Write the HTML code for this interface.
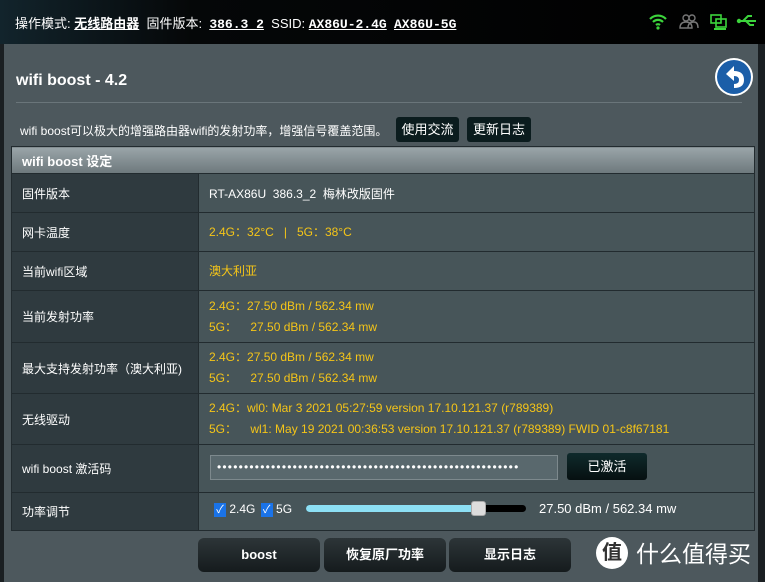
<!DOCTYPE html>
<html><head><meta charset="utf-8"><style>
*{margin:0;padding:0;box-sizing:border-box}
html,body{width:765px;height:582px;overflow:hidden}
body{background:#1a1f22;font-family:"Liberation Sans","Noto Sans CJK SC",sans-serif;font-size:12px;color:#fff;position:relative}
.top{position:absolute;left:0;top:0;width:765px;height:44px;background:linear-gradient(90deg,#12242c 0,#050708 25%,#000 100%)}
.top .t{position:absolute;left:15px;top:13px;font-size:13px;color:#fff;white-space:nowrap}
.top u{font-family:"Liberation Mono","Noto Sans CJK SC",monospace;font-weight:bold;font-size:13px}
.panel{position:absolute;left:4px;top:44px;width:754px;height:538px;background:#4d585d}
h1{position:absolute;left:16px;top:72px;font-size:16px;font-weight:bold;color:#fff}
.hr{position:absolute;left:16px;top:102px;width:726px;height:1px;background:#6a757a}
.desc{position:absolute;left:20px;top:122px;font-size:12px}
.btn{position:absolute;background:#0b1c1e;border-radius:3px;color:#fff;text-align:center}
table{position:absolute;left:11px;top:146px;width:744px;border-collapse:collapse}
td{border:1px solid #222b2f;font-size:12px;padding-left:10px}
td.l{width:187px;background:#2f3a3f}
td.r{background:#475559}
.y{color:#f5c518;line-height:21px}
.hd{background:linear-gradient(#9aa5a9,#6d787c);height:27px;font-weight:bold;font-size:13px}
.bb{position:absolute;top:538px;height:34px;width:122px;background:linear-gradient(#2d3538,#151b1d);border-radius:6px;font-weight:bold;font-size:13px;text-align:center;line-height:34px}
</style></head><body>
<div class="top"><div class="t">操作模式: <u style="font-family:'Liberation Sans','Noto Sans CJK SC',sans-serif">无线路由器</u>&nbsp; 固件版本: &nbsp;<u>386.3_2</u>&nbsp; SSID: <u>AX86U-2.4G</u>&nbsp; <u>AX86U-5G</u></div>
<svg style="position:absolute;left:648px;top:12px" width="110" height="20">
<g fill="none" stroke="#3cd43c" stroke-width="2.2"><path d="M2 7a11 11 0 0 1 16 0M5 10a7 7 0 0 1 10 0M8 13a3 3 0 0 1 4 0"/></g><circle cx="10" cy="16" r="1.6" fill="#3cd43c"/>
<g fill="none" stroke="#777" stroke-width="1.4"><circle cx="38" cy="6" r="3"/><circle cx="44" cy="6" r="3"/><path d="M32 16q0-6 6-6q6 0 6 6zM40 16q0-6 6-6q4 0 4 6"/></g>
<g fill="none" stroke="#3cd43c" stroke-width="1.6"><rect x="63" y="3" width="10" height="8"/><rect x="68" y="7" width="10" height="8"/></g><path d="M66 17h12" stroke="#3cd43c" stroke-width="2"/>
<g fill="none" stroke="#3cd43c" stroke-width="2"><path d="M90 9h18M95 9l5-5h4M98 9l4 4h4"/></g><circle cx="91" cy="9" r="2.2" fill="#3cd43c"/>
</svg></div>
<div class="panel"></div>
<h1>wifi boost - 4.2</h1>
<svg style="position:absolute;left:714px;top:57px" width="40" height="40"><circle cx="20" cy="20" r="19" fill="#fff"/><circle cx="20" cy="20" r="17" fill="#1b5ea8"/><path d="M12 17l8-8v5q10 0 10 9q0 8-10 8v-4q5 0 5-4q0-4-5-4v5z" fill="#fff"/></svg>
<div class="hr"></div>
<div class="desc">wifi boost可以极大的增强路由器wifi的发射功率，增强信号覆盖范围。</div>
<div class="btn" style="left:396px;top:117px;width:63px;height:25px;line-height:25px;font-size:13px">使用交流</div>
<div class="btn" style="left:467px;top:117px;width:64px;height:25px;line-height:25px;font-size:13px">更新日志</div>
<table>
<tr><td colspan="2" class="hd">wifi boost 设定</td></tr>
<tr style="height:39px"><td class="l">固件版本</td><td class="r">RT-AX86U&nbsp; 386.3_2&nbsp; 梅林改版固件</td></tr>
<tr style="height:39px"><td class="l">网卡温度</td><td class="r y">2.4G：32°C &nbsp; | &nbsp; 5G：38°C</td></tr>
<tr style="height:39px"><td class="l">当前wifi区域</td><td class="r y">澳大利亚</td></tr>
<tr style="height:52px"><td class="l">当前发射功率</td><td class="r y">2.4G：27.50 dBm / 562.34 mw<br>5G：&nbsp;&nbsp;&nbsp; 27.50 dBm / 562.34 mw</td></tr>
<tr style="height:51px"><td class="l">最大支持发射功率（澳大利亚)</td><td class="r y">2.4G：27.50 dBm / 562.34 mw<br>5G：&nbsp;&nbsp;&nbsp; 27.50 dBm / 562.34 mw</td></tr>
<tr style="height:51px"><td class="l">无线驱动</td><td class="r y">2.4G：wl0: Mar 3 2021 05:27:59 version 17.10.121.37 (r789389)<br>5G：&nbsp;&nbsp;&nbsp; wl1: May 19 2021 00:36:53 version 17.10.121.37 (r789389) FWID 01-c8f67181</td></tr>
<tr style="height:48px"><td class="l">wifi boost 激活码</td><td class="r"></td></tr>
<tr style="height:38px"><td class="l">功率调节</td><td class="r"></td></tr>
</table>
<div style="position:absolute;left:210px;top:455px;width:348px;height:25px;background:#59686d;border:1px solid #7d898d;color:#fff;font-size:12px;line-height:22px;padding-left:6px;letter-spacing:1.2px;overflow:hidden;white-space:nowrap">••••••••••••••••••••••••••••••••••••••••••••••••••••••••</div>
<div class="btn" style="left:567px;top:453px;width:80px;height:27px;line-height:27px;font-size:13px;background:linear-gradient(#0f2a2c,#061011)">已激活</div>
<div style="position:absolute;left:214px;top:502px;font-size:12px;line-height:14px">
<span style="display:inline-block;width:12px;height:14px;background:#1a73e8;vertical-align:middle;font-size:11px;text-align:center">✓</span> 2.4G
<span style="display:inline-block;width:12px;height:14px;background:#1a73e8;vertical-align:middle;font-size:11px;text-align:center;margin-left:2px">✓</span> 5G</div>
<div style="position:absolute;left:306px;top:505px;width:220px;height:7px;background:#000;border-radius:4px"></div>
<div style="position:absolute;left:306px;top:505px;width:172px;height:7px;background:#8de0f5;border-radius:4px"></div>
<div style="position:absolute;left:471px;top:501px;width:15px;height:15px;background:#ddd;border:1px solid #aaa;border-radius:3px"></div>
<div style="position:absolute;left:539px;top:501px;font-size:13px">27.50 dBm / 562.34 mw</div>
<div class="bb" style="left:198px">boost</div>
<div class="bb" style="left:324px">恢复原厂功率</div>
<div class="bb" style="left:449px">显示日志</div>
<div style="position:absolute;left:596px;top:537px;width:32px;height:32px;border-radius:50%;background:#fff;color:#333;font-size:20px;text-align:center;line-height:32px;font-weight:bold">值</div>
<div style="position:absolute;left:636px;top:539px;font-size:23px;color:#fff;line-height:30px;white-space:nowrap">什么值得买</div>
</body></html>
